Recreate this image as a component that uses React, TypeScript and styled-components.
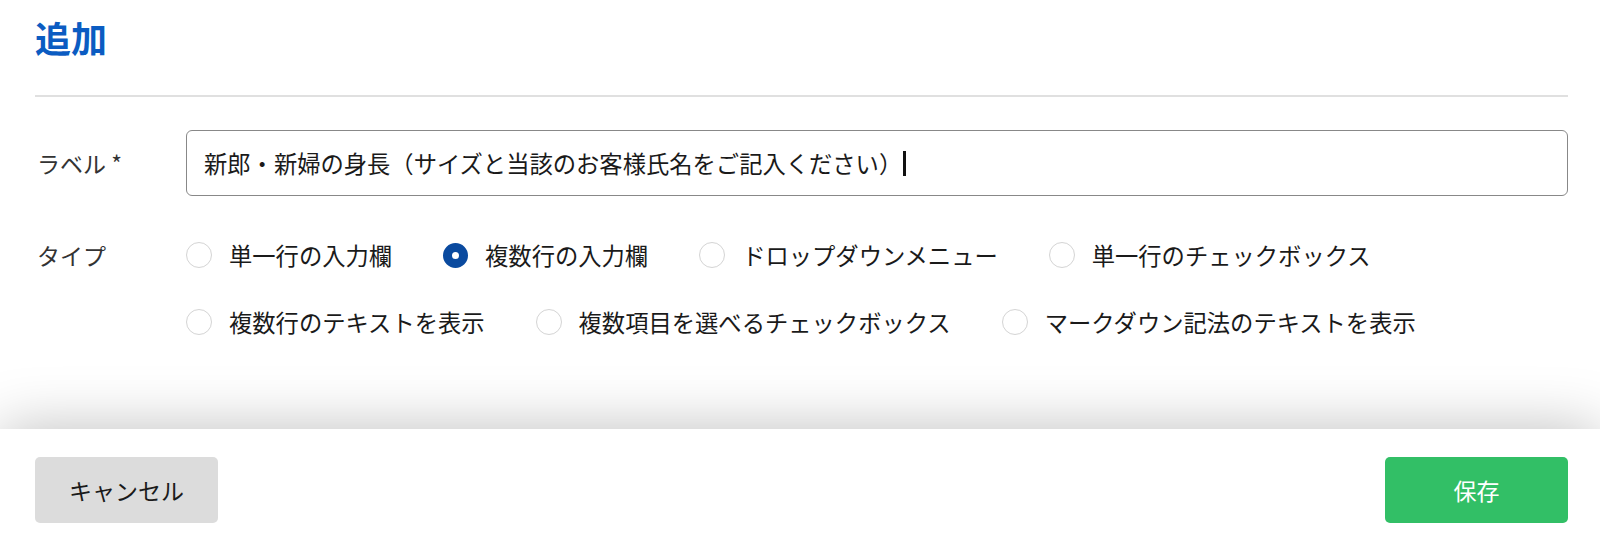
import React, { useState } from "react";
import styled, { createGlobalStyle } from "styled-components";

const GlobalStyle = createGlobalStyle`
    html, body {
        margin: 0;
        padding: 0;
        background: #fff;
    }
    body {
        font-family: "Noto Sans CJK JP", "Noto Sans", sans-serif;
        color: #222;
    }
`;

const Page = styled.div`
    display: flex;
    flex-direction: column;
    height: 100vh;
    overflow: hidden;
`;

const Main = styled.div`
    flex: 1;
    padding: 19px 32px 0 35px;
`;

const Title = styled.h1`
    margin: 0;
    font-size: 36px;
    line-height: 36px;
    font-weight: 700;
    color: #0b5cc2;
`;

const Divider = styled.hr`
    margin: 40px 0 0 0;
    border: none;
    height: 2px;
    background: #e0e0e0;
`;

const Form = styled.div`
    display: flex;
    flex-direction: column;
    gap: 42px;
    margin-top: 33px;
`;

const Row = styled.div<{ $align?: string }>`
    display: grid;
    grid-template-columns: 151px 1fr;
    align-items: ${(p) => p.$align || "center"};
`;

const Label = styled.div`
    font-size: 23px;
    line-height: 34px;
    color: #333;
    padding-left: 2px;
`;

const InputBox = styled.div`
    display: flex;
    align-items: center;
    height: 66px;
    box-sizing: border-box;
    border: 1.5px solid #888;
    border-radius: 6px;
    padding: 0 17px;
    font-size: 23.3px;
    color: #1a1a1a;
    white-space: nowrap;
`;

const Caret = styled.span`
    display: inline-block;
    width: 3px;
    height: 25px;
    margin-left: 1px;
    background: #111;
`;

const Options = styled.div`
    display: flex;
    flex-wrap: wrap;
    column-gap: 51px;
    row-gap: 33px;
`;

const Option = styled.label`
    display: flex;
    align-items: center;
    gap: 17px;
    height: 34px;
    font-size: 23.3px;
    color: #1a1a1a;
    cursor: pointer;
`;

const Radio = styled.span<{ $checked: boolean }>`
    display: inline-block;
    box-sizing: border-box;
    width: ${(p) => (p.$checked ? "25px" : "26px")};
    height: ${(p) => (p.$checked ? "25px" : "26px")};
    border-radius: 50%;
    background: #fff;
    border: ${(p) => (p.$checked ? "9px solid #0a4a9f" : "1.5px solid #d4d4d4")};
`;

const Footer = styled.div`
    height: 108px;
    box-sizing: border-box;
    padding: 28px 32px 0 35px;
    display: flex;
    justify-content: space-between;
    align-items: flex-start;
    background: #fff;
    box-shadow: 0 0 60px rgba(0, 0, 0, 0.26);
    position: relative;
`;

const Button = styled.button<{ $primary?: boolean }>`
    width: 183px;
    height: 66px;
    border: none;
    border-radius: 5px;
    font-family: inherit;
    font-size: 23px;
    cursor: pointer;
    background: ${(p) => (p.$primary ? "#32bf66" : "#dcdcdc")};
    color: ${(p) => (p.$primary ? "#fff" : "#1a1a1a")};
`;

const types = [
    "単一行の入力欄",
    "複数行の入力欄",
    "ドロップダウンメニュー",
    "単一行のチェックボックス",
    "複数行のテキストを表示",
    "複数項目を選べるチェックボックス",
    "マークダウン記法のテキストを表示",
];

export default function App() {
    const [selected, setSelected] = useState(1);
    return (
        <>
            <GlobalStyle />
            <Page>
                <Main>
                    <Title>追加</Title>
                    <Divider />
                    <Form>
                        <Row>
                            <Label>ラベル *</Label>
                            <InputBox>
                                新郎・新婦の身長（サイズと当該のお客様氏名をご記入ください）
                                <Caret />
                            </InputBox>
                        </Row>
                        <Row $align="start">
                            <Label>タイプ</Label>
                            <Options>
                                {types.map((t, i) => (
                                    <Option key={t} onClick={() => setSelected(i)}>
                                        <Radio $checked={selected === i} />
                                        {t}
                                    </Option>
                                ))}
                            </Options>
                        </Row>
                    </Form>
                </Main>
                <Footer>
                    <Button>キャンセル</Button>
                    <Button $primary>保存</Button>
                </Footer>
            </Page>
        </>
    );
}
